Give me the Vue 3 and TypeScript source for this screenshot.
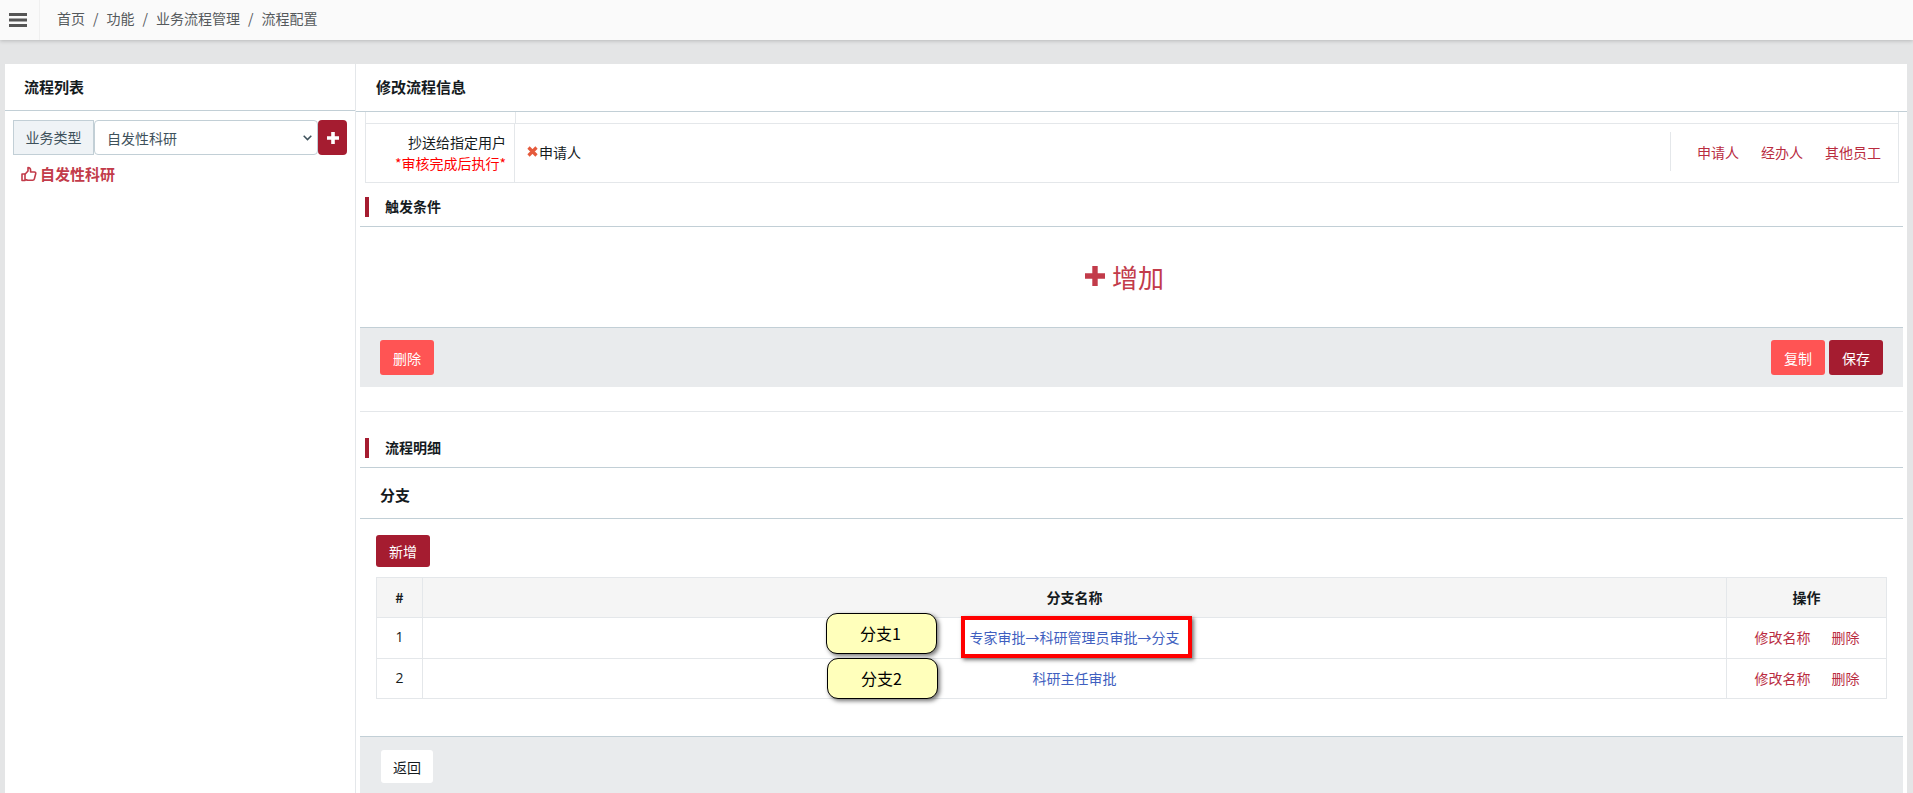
<script setup lang="ts">
interface Branch { id: number; name: string }
const crumbs: string[] = ['首页', '功能', '业务流程管理', '流程配置']
const branches: Branch[] = [
  { id: 1, name: '专家审批→科研管理员审批→分支' },
  { id: 2, name: '科研主任审批' },
]
const ccLinks: string[] = ['申请人', '经办人', '其他员工']
</script>

<template>
  <div class="app">
    <header class="topbar">
      <div class="toggler">
        <svg width="18" height="14" viewBox="0 0 18 14"><rect width="18" height="3" fill="#555" /><rect y="5.5" width="18" height="3" fill="#555" /><rect y="11" width="18" height="3" fill="#555" /></svg>
      </div>
      <nav class="crumbs">
        <template v-for="(c, i) in crumbs" :key="c">
          <span v-if="i" class="sep">/</span><span>{{ c }}</span>
        </template>
      </nav>
    </header>

    <main class="main">
      <aside class="left">
        <div class="panel-head left-head">流程列表</div>
        <div class="picker">
          <span class="addon">业务类型</span>
          <div class="sel-wrap">
            <select class="sel"><option>自发性科研</option></select>
            <svg class="chev" width="9" height="6" viewBox="0 0 9 6" fill="none" stroke="#3e515b" stroke-width="1.500"><path d="M.7.8 4.500 4.600 8.300.8" /></svg>
          </div>
          <button class="plus-btn" aria-label="添加">
            <svg width="12" height="12" viewBox="0 0 12 12"><path d="M4.200 0h3.600v4.200H12v3.600H7.800V12H4.200V7.800H0V4.200h4.200z" fill="#fff" /></svg>
          </button>
        </div>
        <div class="tree-item">
          <svg width="16" height="16" viewBox="0 0 16 16" fill="none" stroke="#c23b4a" stroke-width="1.600" stroke-linejoin="round"><path d="M1 8h3v6.500H1z" /><path d="M4 8.200 7 5V1.500c1.700 0 2.600 1.200 2.600 2.800V6h3.800c1 0 1.600.8 1.300 1.800l-1.300 5c-.2.9-.9 1.400-1.800 1.400H7c-1.100 0-2-.6-3-.6" /></svg>
          <span>自发性科研</span>
        </div>
      </aside>

      <section class="right">
        <div class="panel-head right-head">修改流程信息</div>
        <div class="content">
          <div class="cc-table">
            <div class="cc-stub"><span class="cc-l"></span><span></span></div>
            <div class="cc-row">
              <div class="cc-label">
                <div>抄送给指定用户</div>
                <div class="warn">*审核完成后执行*</div>
              </div>
              <div class="cc-value">
                <svg width="11" height="11" viewBox="0 0 11 11"><path d="M1.500 1.500 9.500 9.500M9.500 1.500 1.500 9.500" stroke="#e55a3c" stroke-width="3.200" /></svg>
                <span>申请人</span>
              </div>
              <div class="cc-links">
                <a v-for="l in ccLinks" :key="l" class="link">{{ l }}</a>
              </div>
            </div>
          </div>

          <h3 class="sec-title"><i></i>触发条件</h3>
          <div class="add-area">
            <svg width="20" height="20" viewBox="0 0 20 20"><path d="M7.300 0h5.400v7.300H20v5.400h-7.300V20H7.300v-7.300H0V7.300h7.300z" fill="#c23b4a" /></svg>
            <span>增加</span>
          </div>
          <div class="foot between">
            <button class="btn danger">删除</button>
            <div class="foot-right">
              <button class="btn danger">复制</button>
              <button class="btn primary">保存</button>
            </div>
          </div>

          <hr class="rule" />

          <h3 class="sec-title detail"><i></i>流程明细</h3>
          <div class="card">
            <div class="card-head">分支</div>
            <div class="card-body">
              <button class="btn primary new">新增</button>
              <div class="table-wrap">
                <table class="tbl">
                  <colgroup><col class="c1" /><col /><col class="c3" /></colgroup>
                  <thead><tr><th>#</th><th>分支名称</th><th>操作</th></tr></thead>
                  <tbody>
                    <tr v-for="b in branches" :key="b.id">
                      <td class="num">{{ b.id }}</td>
                      <td><a class="blue">{{ b.name }}</a></td>
                      <td class="ops"><a class="link">修改名称</a><a class="link">删除</a></td>
                    </tr>
                  </tbody>
                </table>
                <div class="note n1">分支1</div>
                <div class="note n2">分支2</div>
                <div class="redbox"></div>
              </div>
            </div>
            <div class="foot last"><button class="btn white">返回</button></div>
          </div>
        </div>
      </section>
    </main>
  </div>
</template>

<style>
html, body { margin: 0; overflow: hidden; background: #e4e5e6; }
</style>

<style scoped>
.app { height: 793px; overflow: hidden; display: flex; flex-direction: column; background: #e4e5e6; color: #151b1e; font-family: "Noto Sans CJK SC", "Open Sans", sans-serif; font-size: 14px; }
.topbar { height: 40px; flex: none; display: flex; align-items: center; background: #fafafa; box-shadow: 0 1px 4px rgba(0,0,0,.2); position: relative; z-index: 2; }
.toggler { width: 40px; height: 40px; box-sizing: border-box; border-right: 1px solid #f0f0f0; padding: 11px 0 0 9px; }
.crumbs { margin-left: 17px; margin-top: -5px; color: #55595c; display: flex; gap: 8px; line-height: 20px; }
.sep { color: #55595c; }
.main { flex: 1; min-height: 0; display: flex; padding: 24px 6px 0 5px; }
.left { width: 350px; flex: none; background: #fff; border-right: 1px solid #e4e7ea; }
.right { flex: 1; min-width: 0; background: #fff; }
.panel-head { height: 47px; box-sizing: border-box; border-bottom: 1px solid #c2cfd6; font-size: 15px; font-weight: 700; line-height: 46px; }
.left-head { padding-left: 19px; }
.right-head { padding-left: 20px; height: 48px; }
.picker { display: flex; height: 35px; margin: 9px 8px 0 8px; }
.addon { width: 81px; box-sizing: border-box; background: #eff3f6; border: 1px solid #c2cfd6; color: #3e515b; text-align: center; line-height: 33px; }
.sel-wrap { position: relative; width: 224px; height: 35px; }
.sel { appearance: none; width: 100%; height: 35px; box-sizing: border-box; border: 1px solid #c2cfd6; border-radius: 4px; background: #fff; color: #3e515b; font: inherit; padding-left: 12px; }
.chev { position: absolute; right: 6px; top: 15px; pointer-events: none; }
.plus-btn { width: 29px; height: 35px; margin-left: 0; padding: 0; border: 0; border-radius: 4px; background: #a51c30; display: flex; align-items: center; justify-content: center; }
.tree-item { margin: 9px 0 0 16px; display: flex; align-items: center; gap: 3px; color: #c23b4a; font-size: 15px; font-weight: 700; line-height: 20px; }
.content { padding: 0 4px; }
.cc-table { margin-left: 5px; margin-right: 4px; border: 1px solid #e4e7ea; border-top: 0; }
.cc-stub { height: 11px; border-bottom: 1px solid #e4e7ea; display: flex; }
.cc-l { width: 149px; border-right: 1px solid #e4e7ea; }
.cc-row { display: flex; height: 58px; }
.cc-label { width: 149px; box-sizing: border-box; border-right: 1px solid #e4e7ea; text-align: right; padding: 8px 8px 0 0; line-height: 21px; }
.warn { color: #f00; }
.cc-value { flex: 1; display: flex; align-items: center; gap: 1px; padding-left: 12px; padding-bottom: 3px; }
.cc-links { width: 228px; height: 39px; margin-top: 8px; box-sizing: border-box; border-left: 1px solid #e4e7ea; display: flex; gap: 22px; padding-left: 26px; align-items: center; }
.link { color: #b92c3f; }
.sec-title { position: relative; margin: 0; height: 30px; padding: 13px 0 0 25px; border-bottom: 1px solid #c2cfd6; font-size: 14px; line-height: 20px; font-weight: 700; }
.sec-title i { position: absolute; left: 5px; top: 14px; width: 4px; height: 20px; background: #a51c30; }
.sec-title.detail { padding-top: 25px; }
.sec-title.detail i { top: 26px; }
.add-area { height: 100px; display: flex; align-items: center; justify-content: center; gap: 7px; color: #c23b4a; font-size: 26px; padding: 0 14px 2px 0; box-sizing: border-box; }
.foot { background: #e9ebed; border-top: 1px solid #c2cfd6; box-sizing: border-box; }
.between { height: 60px; display: flex; justify-content: space-between; padding: 12px 20px; }
.foot-right { display: flex; gap: 4px; }
.btn { width: 54px; height: 35px; padding: 0; border: 0; border-radius: 3px; font: inherit; font-size: 14px; color: #fff; }
.danger { background: #ff5454; }
.primary { background: #a51c30; }
.white { background: #fff; color: #151b1e; width: 52px; height: 33px; }
.rule { margin: 24px 0 0; border: 0; border-top: 1px solid #e4e7ea; }
.card { margin-top: 4px; background: #fff; }
.card-head { height: 47px; box-sizing: border-box; border-bottom: 1px solid #c2cfd6; padding-left: 20px; font-size: 15px; font-weight: 700; line-height: 46px; }
.card-body { padding: 16px 16px 37px; }
.new { display: block; height: 32px; }
.table-wrap { position: relative; margin-top: 10px; }
.tbl { width: 100%; table-layout: fixed; border-collapse: collapse; text-align: center; }
.c1 { width: 46px; }
.c3 { width: 160px; }
.tbl th, .tbl td { border: 1px solid #e4e7ea; padding: 0 0 2px; box-sizing: border-box; line-height: 20px; }
.tbl th { height: 40px; background: #f5f5f5; font-weight: 700; }
.tbl td { height: 41px; }
.tbl tr:last-child td { height: 40px; }
.num { font-family: "Open Sans", sans-serif; }
.blue { color: #3f5fc0; }
.tbl .ops { padding-left: 1px; }
.ops .link + .link { margin-left: 21px; }
.note { position: absolute; width: 111px; height: 41px; box-sizing: border-box; border: 1px solid #000; border-radius: 11px; background: #ffffbb; box-shadow: 2px 2px 4px rgba(0,0,0,.55); color: #000; font-family: "Noto Sans CJK SC", "Liberation Sans", sans-serif; font-size: 16px; display: flex; align-items: center; justify-content: center; padding: 0 2px 1px 0; }
.n1 { left: 450px; top: 36px; }
.n2 { left: 451px; top: 81px; }
.redbox { position: absolute; left: 585px; top: 39px; width: 231px; height: 42px; box-sizing: border-box; border: 4px solid #f00; box-shadow: 2px 2px 4px rgba(0,0,0,.55); pointer-events: none; }
.last { margin-top: 0; height: 70px; padding: 13px 21px; }
</style>
